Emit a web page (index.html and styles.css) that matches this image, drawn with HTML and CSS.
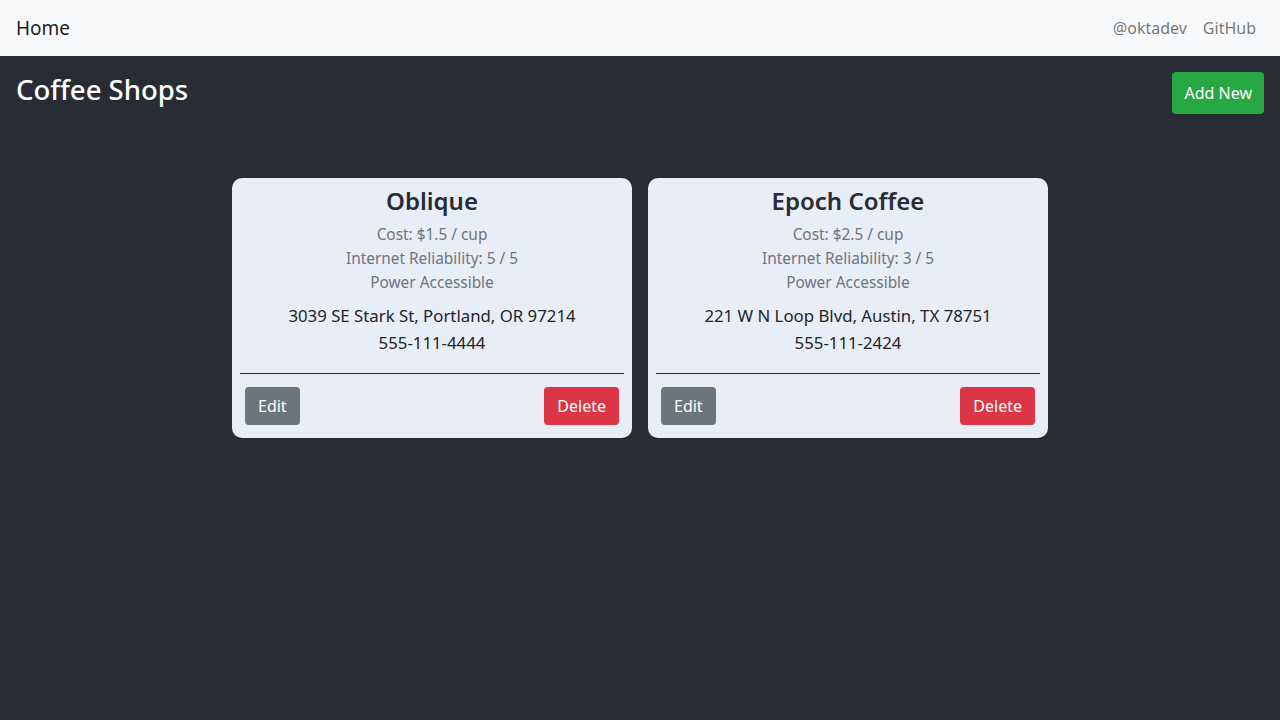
FILE: index.html
```html
<!DOCTYPE html>
<html lang="en">
<head>
<meta charset="utf-8">
<title>Coffee Shops</title>
<link rel="stylesheet" href="styles.css">
</head>
<body>
<nav class="navbar">
  <a class="brand" href="#">Home</a>
  <div class="nav-links">
    <a class="nav-link" href="#">@oktadev</a>
    <a class="nav-link" href="#">GitHub</a>
  </div>
</nav>
<main class="main">
  <div class="header">
    <h2 class="title">Coffee Shops</h2>
    <button class="btn btn-success">Add New</button>
  </div>
  <div class="cards">
    <div class="card">
      <h3 class="card-title">Oblique</h3>
      <div class="meta">
        <div>Cost: $1.5 / cup</div>
        <div>Internet Reliability: 5 / 5</div>
        <div>Power Accessible</div>
      </div>
      <div class="contact">
        <div>3039 SE Stark St, Portland, OR 97214</div>
        <div>555-111-4444</div>
      </div>
      <hr class="divider">
      <div class="card-footer">
        <button class="btn btn-secondary">Edit</button>
        <button class="btn btn-danger">Delete</button>
      </div>
    </div>
    <div class="card">
      <h3 class="card-title">Epoch Coffee</h3>
      <div class="meta">
        <div>Cost: $2.5 / cup</div>
        <div>Internet Reliability: 3 / 5</div>
        <div>Power Accessible</div>
      </div>
      <div class="contact">
        <div>221 W N Loop Blvd, Austin, TX 78751</div>
        <div>555-111-2424</div>
      </div>
      <hr class="divider">
      <div class="card-footer">
        <button class="btn btn-secondary">Edit</button>
        <button class="btn btn-danger">Delete</button>
      </div>
    </div>
  </div>
</main>
</body>
</html>
```

FILE: styles.css
```css
* { box-sizing: border-box; }
html, body { margin: 0; padding: 0; }
body {
  background: #282c34;
  font-family: "Noto Sans", "Open Sans", sans-serif;
  font-size: 15.4px;
  min-height: 720px;
}
.navbar {
  height: 56px;
  background: #f8f9fa;
  display: flex;
  align-items: center;
  justify-content: space-between;
  padding: 0 16px;
}
.brand {
  font-size: 19px;
  color: rgba(0,0,0,0.9);
  text-decoration: none;
}
.nav-links { display: flex; }
.nav-link {
  color: rgba(0,0,0,0.55);
  text-decoration: none;
  font-size: 16px;
  padding: 8px;
}
.main { padding: 16px 16px 0 16px; }
.header {
  display: flex;
  justify-content: space-between;
  align-items: flex-start;
}
.title {
  margin: 0;
  color: #fff;
  font-size: 27.5px;
  font-weight: 500;
  line-height: 36px;
}
.btn {
  border: none;
  border-radius: 4px;
  color: #fff;
  font-family: inherit;
  font-size: 16px;
  line-height: 24px;
  padding: 7px 13px;
  cursor: pointer;
}
.header .btn { padding: 9px 12px; }
.btn-success { background: #28a745; }
.btn-secondary { background: #6c757d; }
.btn-danger { background: #dc3545; }
.cards {
  display: flex;
  justify-content: center;
  gap: 16px;
  margin-top: 64px;
}
.card {
  width: 400px;
  background: #e9edf8;
  border-radius: 10px;
  padding: 8px 8px 13px 8px;
  text-align: center;
}
.card-title {
  margin: 0;
  font-size: 24px;
  font-weight: 600;
  line-height: 29px;
  color: #282c34;
}
.meta {
  margin-top: 8px;
  color: #6c757d;
  line-height: 24px;
}
.contact {
  margin-top: 7px;
  color: #212529;
  font-size: 16.8px;
  line-height: 27px;
}
.divider {
  margin: 17px 0 0 0;
  border: none;
  border-top: 1px solid #282c34;
  height: 0;
}
.card-footer {
  display: flex;
  justify-content: space-between;
  padding: 13px 5px 0 5px;
}
```
